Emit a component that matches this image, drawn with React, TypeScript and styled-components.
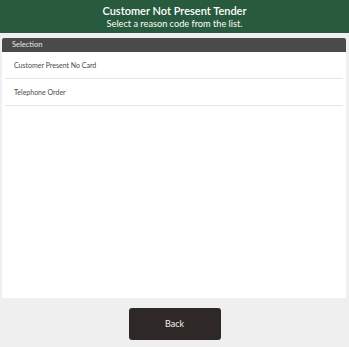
import React from "react";
import styled, { createGlobalStyle } from "styled-components";

const GlobalStyle = createGlobalStyle`
  html, body {
    margin: 0;
    padding: 0;
    height: 100%;
    background: #efefef;
  }
  #root {
    height: 100%;
  }
`;

const Screen = styled.div`
  display: flex;
  flex-direction: column;
  height: 347px;
  font-family: Lato, "Open Sans", sans-serif;
  background: #efefef;
`;

const Header = styled.header`
  box-sizing: border-box;
  height: 33px;
  padding-top: 3px;
  background: #285a3e;
  color: #ffffff;
  display: flex;
  flex-direction: column;
  align-items: center;
`;

const Title = styled.h1`
  margin: 0;
  font-size: 11px;
  font-weight: 600;
  line-height: 15px;
`;

const Subtitle = styled.p`
  margin: 0;
  font-size: 9.2px;
  line-height: 12px;
`;

const Body = styled.main`
  flex: 1;
  padding: 5px 3px 0 2px;
  display: flex;
  flex-direction: column;
`;

const Panel = styled.section`
  flex: 1;
  background: #ffffff;
  display: flex;
  flex-direction: column;
`;

const PanelHead = styled.div`
  height: 14px;
  background: #4a4a4a;
  color: #e8e8e8;
  font-size: 7.5px;
  line-height: 14px;
  padding-left: 10px;
  border-radius: 2px 2px 0 0;
`;

const List = styled.ul`
  list-style: none;
  margin: 0;
  padding: 0 3px;
`;

const Row = styled.li`
  height: 26px;
  display: flex;
  align-items: center;
  padding-left: 9px;
  font-size: 7px;
  color: #4a4a4a;
  border-bottom: 1px solid #e6e6e6;
`;

const Footer = styled.footer`
  height: 49px;
  display: flex;
  align-items: center;
  justify-content: center;
`;

const BackButton = styled.button`
  width: 92px;
  height: 32px;
  border: none;
  border-radius: 3px;
  background: #2e2926;
  color: #f2f2f2;
  font-family: inherit;
  font-size: 9px;
  margin-top: 2px;
`;

const reasons = ["Customer Present No Card", "Telephone Order"];

export default function App() {
  return (
    <>
      <GlobalStyle />
      <Screen>
        <Header>
          <Title>Customer Not Present Tender</Title>
          <Subtitle>Select a reason code from the list.</Subtitle>
        </Header>
        <Body>
          <Panel>
            <PanelHead>Selection</PanelHead>
            <List>
              {reasons.map((r) => (
                <Row key={r}>{r}</Row>
              ))}
            </List>
          </Panel>
        </Body>
        <Footer>
          <BackButton>Back</BackButton>
        </Footer>
      </Screen>
    </>
  );
}
